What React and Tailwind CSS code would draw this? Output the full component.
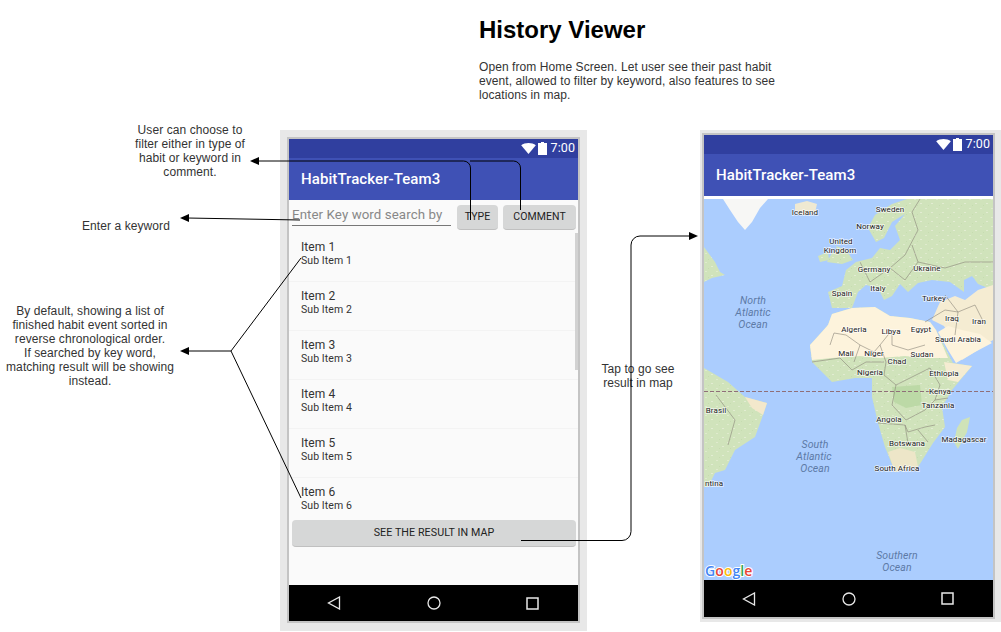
const items = [1, 2, 3, 4, 5, 6];

const mapLabels = [
  ['Iceland', 805, 215], ['Sweden', 890, 212], ['Norway', 870, 229], ['United', 841, 244], ['Kingdom', 840, 253],
  ['Germany', 874, 272], ['Ukraine', 927, 271], ['Spain', 842, 296], ['Italy', 878, 291], ['Turkey', 934, 301],
  ['Iraq', 952, 321], ['Iran', 979, 324], ['Algeria', 854, 332], ['Libya', 891, 334], ['Egypt', 921, 332],
  ['Saudi Arabia', 958, 342], ['Mali', 846, 356], ['Niger', 874, 356], ['Sudan', 922, 357], ['Chad', 897, 364],
  ['Nigeria', 870, 375], ['Ethiopia', 944, 376], ['Kenya', 940, 394], ['Tanzania', 938, 408], ['Brasil', 716, 413],
  ['Angola', 889, 422], ['Madagascar', 964, 442], ['Botswana', 907, 446], ['South Africa', 897, 471], ['ntina', 714, 486],
];

const oceanLabels = [
  ['North', 753, 304], ['Atlantic', 753, 316], ['Ocean', 753, 328],
  ['South', 815, 448], ['Atlantic', 814, 460], ['Ocean', 815, 472],
  ['Southern', 897, 559], ['Ocean', 897, 571],
];

const borders = [
  'M846 335 L860 345 L874 352 L880 345 M846 335 L834 333 L830 345 M860 345 L854 362 M880 345 L892 330 L892 345 L908 350 L925 345',
  'M880 345 L886 362 L884 375 L896 385 L916 375 L930 368 L940 385 L935 400 L948 398 M896 385 L892 405 L906 420 L925 410 L935 400',
  'M878 423 L905 425 L908 432 L925 427 L935 425 M905 425 L908 443 M918 430 L928 442 M812 362 L840 358 L852 370 L866 362 L884 362',
  'M860 262 L870 282 L890 268 L905 280 L918 262 L912 245 M890 268 L905 255 L918 230 L912 212 L920 199 M918 262 L945 268 L965 262 L993 262',
  'M945 295 L958 312 L975 305 L985 325 M925 322 L945 310 L958 312 L955 335 M716 395 L735 420 L728 445',
];

function StatusBar() {
  return (
    <div className="flex h-[19px] items-center justify-end bg-[#303f9f] pr-[3px] text-white">
      <svg width="15" height="11" viewBox="0 0 16 12"><path d="M0 2.5C2 .9 5 0 8 0s6 .9 8 2.5L8 12z" fill="#fff" /></svg>
      <svg className="ml-[2px]" width="9" height="13" viewBox="0 0 9 13"><path d="M3 0h3v1h3v12H0V1h3z" fill="#fff" /></svg>
      <span className="ml-1 font-['Roboto',sans-serif] text-[12.5px] leading-none">7:00</span>
    </div>
  );
}

function NavBar({ height }) {
  return (
    <div className={`flex items-center justify-between bg-black pl-[38px] pr-[39px] ${height}`}>
      <svg width="14" height="14" viewBox="0 0 14 14" fill="none" stroke="#e8e8e8" strokeWidth="1.3">
        <path d="M12.5 1v12L1.5 7z" />
      </svg>
      <svg width="14" height="14" viewBox="0 0 14 14" fill="none" stroke="#e8e8e8" strokeWidth="1.3">
        <circle cx="7" cy="7" r="6" />
      </svg>
      <svg width="13" height="13" viewBox="0 0 13 13" fill="none" stroke="#e8e8e8" strokeWidth="1.5">
        <rect x="1" y="1" width="11" height="11" />
      </svg>
    </div>
  );
}

function AppBar() {
  return (
    <div className="flex h-[42px] items-center bg-[#3f51b5] pl-3 font-['Roboto',sans-serif] text-[15px] font-medium text-white">
      HabitTracker-Team3
    </div>
  );
}

function HistoryPhone() {
  return (
    <div className="absolute left-[280px] top-[130px] h-[501px] w-[307px] bg-[#e8e8e8] pb-2 pl-[7px] pr-[7px] pt-[7px]">
      <div className="flex h-full flex-col border-2 border-[#c4c4c4] bg-[#fafafa]">
        <StatusBar />
        <AppBar />
        <div className="flex flex-1 flex-col font-['Roboto',sans-serif]">
          <div className="flex h-[33px] items-start pl-[3px] pt-[5px]">
            <div className="h-[21px] w-[159px] overflow-hidden whitespace-nowrap border-b border-[#777] text-[13.3px] leading-[20px] text-[#888]">
              Enter Key word search by
            </div>
            <button className="ml-[6px] h-[25px] w-[41px] rounded-sm border-b border-[#c0c0c0] bg-[#d6d7d7] text-[10.5px] text-[#222]">TYPE</button>
            <button className="ml-[5px] h-[25px] w-[73px] rounded-sm border-b border-[#c0c0c0] bg-[#d6d7d7] text-[10.5px] text-[#222]">COMMENT</button>
          </div>
          <div className="relative flex h-[287px] flex-col overflow-hidden">
            {items.map((n) => (
              <div key={n} className="h-[49px] shrink-0 border-b border-[#f3f3f3] pl-3 pt-[7px] text-[#333]">
                <div className="text-[12px] leading-[14px]">Item {n}</div>
                <div className="text-[10.5px] leading-[13px]">Sub Item {n}</div>
              </div>
            ))}
            <div className="absolute right-0 top-0 h-[137px] w-[3px] bg-[#d2d2d2]" />
          </div>
          <button className="ml-[3px] h-[27px] w-[284px] rounded-sm border-b border-[#c0c0c0] bg-[#d6d7d7] text-[10.7px] text-[#222]">
            SEE THE RESULT IN MAP
          </button>
        </div>
        <NavBar height="h-[36px]" />
      </div>
    </div>
  );
}

function WorldMap() {
  return (
    <svg className="block h-[381px] w-full" viewBox="704 199 289 381">
      <defs>
        <pattern id="specks" width="11" height="9" patternUnits="userSpaceOnUse">
          <rect width="11" height="9" fill="#d0e3bb" />
          <rect x="1" y="1" width="2" height="1" fill="#dfeacd" />
          <rect x="7" y="5" width="2" height="1" fill="#e2ecd2" />
          <rect x="4" y="7" width="1" height="1" fill="#c6dcb0" />
        </pattern>
      </defs>
      <rect x="704" y="199" width="289" height="381" fill="#abcdfe" />
      {/* greenland + iceland */}
      <path d="M723 199h45l-8 9-8 14-7 8-7-8-8-12z" fill="#f7f7f5" />
      <path d="M795 204l12-3 10 3-2 9-13 2-7-4z" fill="#efe9d2" />
      {/* eurasia */}
      <path d="M907 199H993V290L978 284 972 276 964 280 964 292 950 282 932 280 918 283 908 292 900 284 892 296 884 300 878 288 866 285 858 292 852 308 832 308 828 292 842 286 846 270 856 262 872 258 880 248 890 250 900 240 895 226 905 214 892 222 884 238 876 242 868 228 875 215 892 204Z" fill="url(#specks)" />
      <path d="M918 284 932 282 946 290 940 296 926 294Z M966 280 974 278 978 294 970 296Z" fill="#abcdfe" />
      <path d="M827 262 832 253 838 252 836 246 846 250 853 260 842 264 834 263Z M818 256 828 252 829 260 820 262Z" fill="url(#specks)" />
      {/* turkey / arabia / desert */}
      <path d="M993 285 978 290 965 300 955 296 940 302 932 320 944 326 952 340 962 360 978 350 993 340Z" fill="#f5ecd2" />
      <path d="M828 325 832 314 852 308 875 307 890 316 910 318 930 322 936 330 953 363 972 366 952 390 942 407 945 427 933 443 918 467 895 472 885 447 878 423 872 397 872 378 855 378 832 382 812 362 810 345 820 334Z" fill="url(#specks)" />
      <path d="M828 325 832 314 852 308 875 307 890 316 910 318 930 322 936 330 948 358 925 358 905 356 880 358 860 356 832 358 812 360 810 345 820 334Z" fill="#fdf3dc" />
      <path d="M938 332 948 326 962 330 980 334 992 343 975 352 956 363 948 350Z" fill="#fdf3dc" />
      <path d="M895 472 888 452 900 448 915 452 918 467Z" fill="#ede6c8" />
      <path d="M944 362 972 366 958 382 948 380Z" fill="#f5ecd2" />
      <path d="M892 387 920 385 922 405 906 408 894 402Z" fill="#bcd9a6" />
      <path d="M962 420 970 417 967 432 958 449 954 442 957 428Z" fill="#cfe3b8" />
      {/* americas */}
      <path d="M704 368 728 382 745 397 767 403 763 415 755 437 735 450 725 470 715 473 708 487H704Z" fill="url(#specks)" />
      <path d="M745 397 767 403 763 415 752 408Z" fill="#f3e8cc" />
      <path d="M704 247 715 262 720 272 725 275 712 278 704 282Z" fill="url(#specks)" />
      {borders.map((d, i) => (
        <path key={i} d={d} fill="none" stroke="#8a8578" strokeWidth="0.6" />
      ))}
      <line x1="704" y1="391.5" x2="993" y2="391.5" stroke="#8f6f78" strokeWidth="1" strokeDasharray="4 2" />
      <g fontFamily="Roboto, sans-serif" fontSize="8" textAnchor="middle" fill="#222" stroke="#fff" strokeWidth="1.6" strokeOpacity="0.7" style={{ paintOrder: 'stroke' }}>
        {mapLabels.map(([t, x, y], i) => (
          <text key={i} x={x} y={y}>{t}</text>
        ))}
      </g>
      <g fontFamily="Roboto, sans-serif" fontSize="10.5" fontStyle="italic" textAnchor="middle" fill="#5d7aa6">
        {oceanLabels.map(([t, x, y], i) => (
          <text key={i} x={x} y={y}>{t}</text>
        ))}
      </g>
      <text x="705" y="576" fontFamily="'Open Sans', sans-serif" fontSize="14" fontWeight="600" stroke="#fff" strokeWidth="2" style={{ paintOrder: 'stroke' }}>
        <tspan fill="#4285f4">G</tspan><tspan fill="#ea4335">o</tspan><tspan fill="#fbbc05">o</tspan><tspan fill="#4285f4">g</tspan><tspan fill="#34a853">l</tspan><tspan fill="#ea4335">e</tspan>
      </text>
    </svg>
  );
}

function MapPhone() {
  return (
    <div className="absolute left-[700px] top-[130px] h-[492px] w-[301px] bg-[#e8e8e8] pb-[3px] pl-[2px] pr-[6px] pt-[3px]">
      <div className="flex h-full flex-col border-2 border-[#c4c4c4] bg-white">
        <StatusBar />
        <AppBar />
        <div className="h-[3px] bg-white" />
        <WorldMap />
        <NavBar height="h-[37px]" />
      </div>
    </div>
  );
}

function Arrows() {
  return (
    <svg className="pointer-events-none absolute left-0 top-0" width="1001" height="632" fill="none" stroke="#000" strokeWidth="1">
      <path d="M470.5 220V168a7 7 0 0 0-7-7H258" />
      <path d="M520.5 210V168a7 7 0 0 0-7-7H470" />
      <path d="M300 220L187 218" />
      <path d="M301 258L231 351L301 498M231 351H187" />
      <path d="M521 540.5H622a9 9 0 0 0 9-9V245a9 9 0 0 1 9-9H691" />
      <g fill="#000" stroke="none">
        <path d="M250 161l9-4v8z" />
        <path d="M180 218l9-4v8z" />
        <path d="M180 351l9-4v8z" />
        <path d="M698 236l-9-4v8z" />
      </g>
    </svg>
  );
}

export default function App() {
  return (
    <div className="relative h-[632px] w-[1001px] overflow-hidden bg-white font-['Liberation_Sans',Arial,sans-serif] text-[12px] leading-[14px] tracking-[0.08px] text-[#333]">
      <div className="absolute left-[479px] top-[16px] text-[24px] font-bold leading-[28px] tracking-normal text-black">History Viewer</div>
      <p className="absolute left-[479px] top-[60px] w-[310px]">
        Open from Home Screen. Let user see their past habit<br />
        event, allowed to filter by keyword, also features to see<br />
        locations in map.
      </p>

      <p className="absolute left-[110px] top-[123px] w-[160px] text-center">
        User can choose to<br />filter either in type of<br />habit or keyword in<br />comment.
      </p>
      <p className="absolute left-[66px] top-[219px] w-[120px] text-center">Enter a keyword</p>
      <p className="absolute left-0 top-[304px] w-[180px] text-center">
        By default, showing a list of<br />
        finished habit event sorted in<br />
        reverse chronological order.<br />
        If searched by key word,<br />
        matching result will be showing<br />
        instead.
      </p>
      <p className="absolute left-[578px] top-[362px] w-[120px] text-center">
        Tap to go see<br />result in map
      </p>

      <HistoryPhone />
      <MapPhone />
      <Arrows />
    </div>
  );
}
